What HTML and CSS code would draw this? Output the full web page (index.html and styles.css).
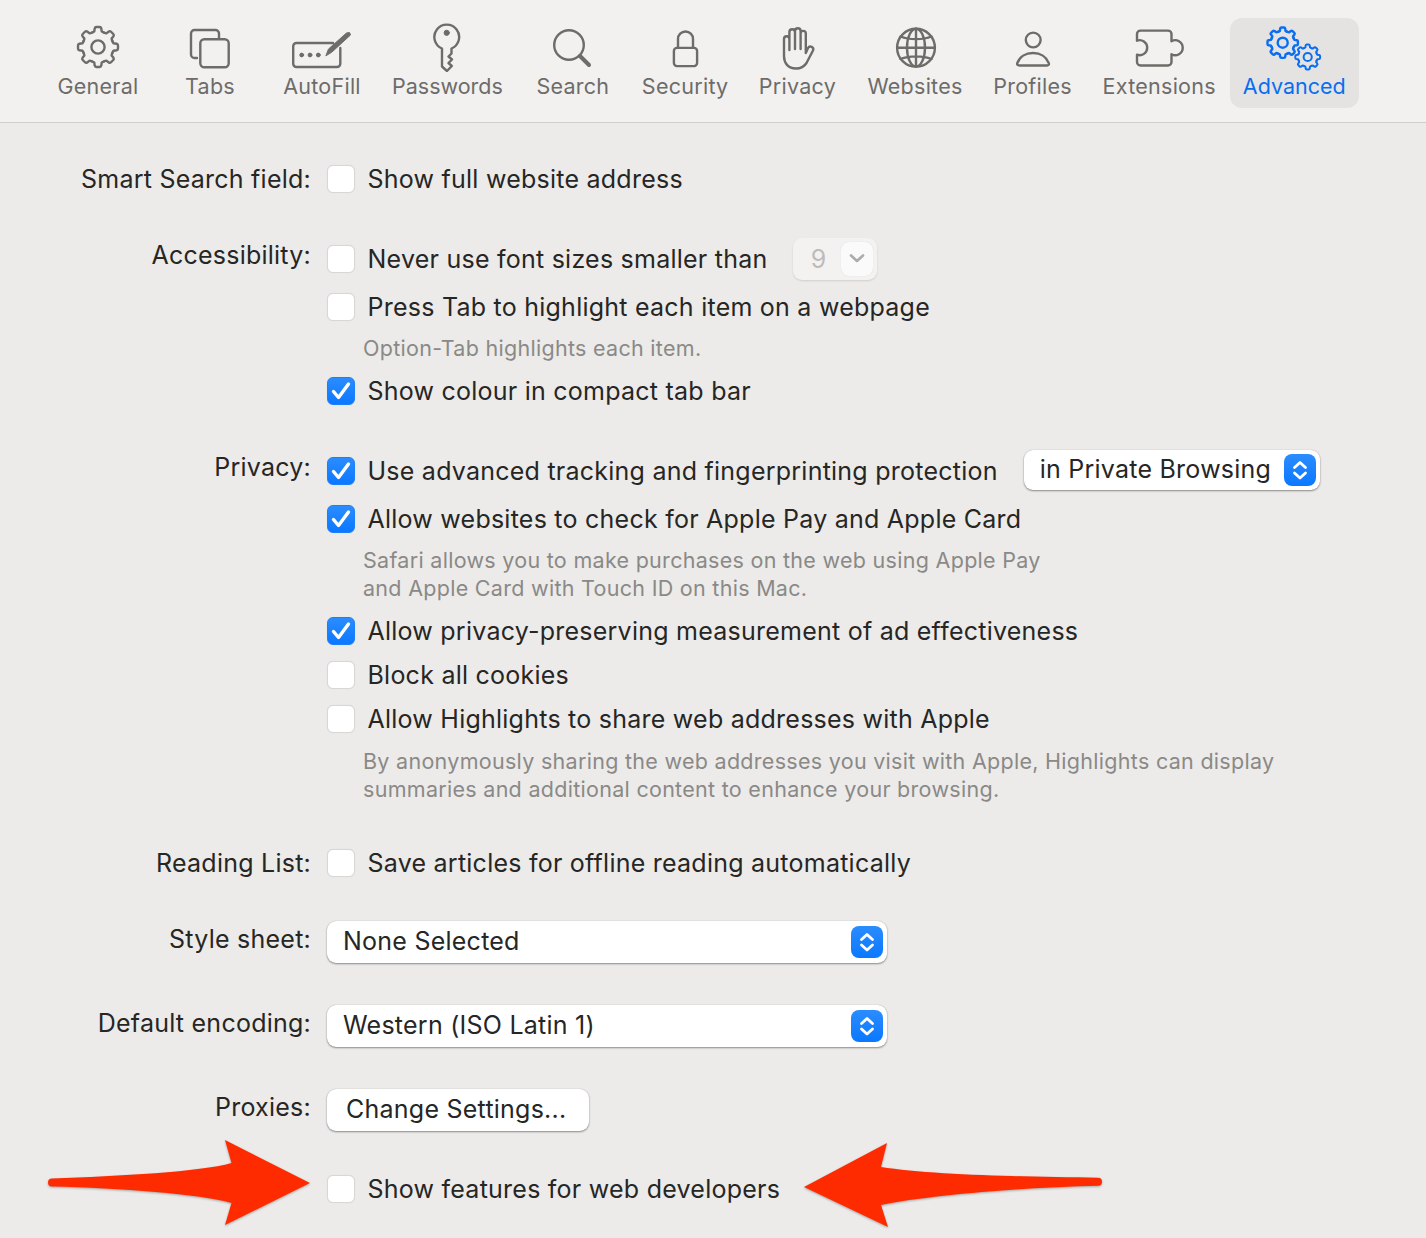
FILE: index.html
```html
<!DOCTYPE html>
<html lang="en">
<head>
    <meta charset="UTF-8">
    <meta name="viewport" content="width=device-width, initial-scale=1.0">
    <title>Advanced</title>
    <link rel="stylesheet" href="styles.css">
</head>
<body>
    <!-- shared icon parts -->
    <svg class="defs" width="0" height="0">
        <defs>
            <path id="tooth" d="M-6.2-14.3C-5-14.7-4.3-15-3.7-15.6L-3.3-18.6C-3.1-19.6-2.4-20-1.6-20H1.6C2.4-20 3.1-19.6 3.3-18.6L3.7-15.6C4.3-15 5-14.7 6.2-14.3"/>
            <g id="gear">
                <use href="#tooth"/>
                <use href="#tooth" transform="rotate(45)"/>
                <use href="#tooth" transform="rotate(90)"/>
                <use href="#tooth" transform="rotate(135)"/>
                <use href="#tooth" transform="rotate(180)"/>
                <use href="#tooth" transform="rotate(225)"/>
                <use href="#tooth" transform="rotate(270)"/>
                <use href="#tooth" transform="rotate(315)"/>
                <circle r="6.6"/>
            </g>
            <g id="updown">
                <path d="M10.5 13.5L16 8.5L21.5 13.5M10.5 19L16 24L21.5 19"/>
            </g>
            <path id="tick" d="M6.500 14.500L11.500 20.500L21.500 7"/>
        </defs>
    </svg>

    <header class="toolbar">
        <div class="tool">
            <svg class="icon" viewBox="0 0 64 50"><use href="#gear" transform="translate(32 25)"/></svg>
            <span>General</span>
        </div>
        <div class="tool">
            <svg class="icon" viewBox="0 0 64 50">
                <path d="M19 36H16.5a3.5 3.5 0 0 1-3.5-3.500V11.500a3.500 3.500 0 0 1 3.500-3.500H37.500a3.500 3.500 0 0 1 3.500 3.500V16"/>
                <rect x="22.300" y="17.300" width="28.400" height="28" rx="4"/>
            </svg>
            <span>Tabs</span>
        </div>
        <div class="tool">
            <svg class="icon" viewBox="0 0 64 50">
                <path d="M43 21H6.500a3.300 3.300 0 0 0-3.300 3.300V41.700a3.300 3.300 0 0 0 3.300 3.300H47a3.300 3.300 0 0 0 3.300-3.300V26"/>
                <circle class="solid" cx="11.700" cy="33" r="1.900"/>
                <circle class="solid" cx="20" cy="33" r="1.900"/>
                <circle class="solid" cx="28.300" cy="33" r="1.900"/>
                <path class="solid" d="M36 33.500L38.500 27L56.500 11L59.500 10.500L60.500 13L42 30Z"/>
            </svg>
            <span>AutoFill</span>
        </div>
        <div class="tool tool-wide tool-tight">
            <svg class="icon" viewBox="0 0 64 50">
                <path d="M27 26.500A12.400 12.400 0 1 1 36.500 26.500V31.500L33.500 34.500L37 37.500L33.500 41L36.800 44L32 49L27 44.500Z"/>
                <circle class="solid" cx="31.700" cy="10.800" r="2.600"/>
            </svg>
            <span>Passwords</span>
        </div>
        <div class="tool">
            <svg class="icon" viewBox="0 0 64 50">
                <circle cx="28" cy="23" r="14.800"/>
                <path class="thick" d="M39 34L48 43"/>
            </svg>
            <span>Search</span>
        </div>
        <div class="tool">
            <svg class="icon" viewBox="0 0 64 50">
                <rect x="20.900" y="25.900" width="23.200" height="18.200" rx="3"/>
                <path d="M25 25V17a7.500 7.500 0 0 1 15 0V25"/>
            </svg>
            <span>Security</span>
        </div>
        <div class="tool">
            <svg class="icon" viewBox="0 0 64 50">
                <path d="M19 34V17a2.700 2.700 0 0 1 5.400 0V28M24.400 17V10a2.800 2.800 0 0 1 5.600 0V27M30 10V9a2.800 2.800 0 0 1 5.600 0V27M35.600 11.500a2.600 2.600 0 0 1 5.200 0V31L43 26a2.800 2.800 0 0 1 5 2.500L41.500 41C39 45 35 46.500 31 46.500C23 46.500 19 41 19 34"/>
            </svg>
            <span>Privacy</span>
        </div>
        <div class="tool tool-wide">
            <svg class="icon" viewBox="0 0 64 50">
                <circle cx="33" cy="25.700" r="18.900"/>
                <ellipse cx="33" cy="25.700" rx="9" ry="18.900"/>
                <path d="M33 6.800V44.600M14.100 25.700H51.900M17.500 14.500C26 18 40 18 48.500 14.500M17.500 37C26 33.500 40 33.500 48.500 37"/>
            </svg>
            <span>Websites</span>
        </div>
        <div class="tool">
            <svg class="icon" viewBox="0 0 64 50">
                <circle cx="32.200" cy="18" r="7.400"/>
                <path d="M18.500 43.500H46C47.500 43.500 48.300 42.500 47.800 41.100C45.500 35 39.500 31 32 31S18.500 35 16.300 41.100C15.800 42.500 16.600 43.500 18.500 43.500Z"/>
            </svg>
            <span>Profiles</span>
        </div>
        <div class="tool tool-wide">
            <svg class="icon" viewBox="0 0 64 50">
                <path d="M13.500 8.600H41a3.500 3.500 0 0 1 3.500 3.500V19.200a7.500 7.500 0 1 1 0 13V40a3.500 3.500 0 0 1-3.500 3.500H13.500a3.500 3.500 0 0 1-3.500-3.500V32.700a7.500 7.500 0 1 0 0-14V12.100a3.500 3.500 0 0 1 3.500-3.500Z"/>
            </svg>
            <span>Extensions</span>
        </div>
        <div class="tool tool-tight tool-active">
            <svg class="icon" viewBox="0 0 64 50">
                <use href="#gear" transform="translate(20.700 20.700) scale(.76)"/>
                <use href="#gear" transform="translate(45.700 35) scale(.62)"/>
            </svg>
            <span>Advanced</span>
        </div>
    </header>

    <main class="prefs">
        <div class="row">
            <div class="name">Smart Search field:</div>
            <div class="check"><span class="box"></span>Show full website address</div>
        </div>

        <div class="row group">
            <div class="name name-up">Accessibility:</div>
            <div class="check">
                <span class="box"></span>Never use font sizes smaller than
                <div class="stepper">
                    <span class="stepper-value">9</span>
                    <span class="stepper-btn"><svg viewBox="0 0 32 32"><path d="M10 13.500L16 19L22 13.500"/></svg></span>
                </div>
            </div>
        </div>
        <div class="row next">
            <div class="check"><span class="box"></span>Press Tab to highlight each item on a webpage</div>
        </div>
        <div class="row row-note">
            <p class="note">Option-Tab highlights each item.</p>
        </div>
        <div class="row">
            <div class="check"><span class="box on"><svg viewBox="0 0 28 28"><use href="#tick"/></svg></span>Show colour in compact tab bar</div>
        </div>

        <div class="row group">
            <div class="name name-up">Privacy:</div>
            <div class="check">
                <span class="box on"><svg viewBox="0 0 28 28"><use href="#tick"/></svg></span>Use advanced tracking and fingerprinting protection
                <div class="popup popup-private">
                    <span class="popup-text">in Private Browsing</span>
                    <span class="popup-btn"><svg viewBox="0 0 32 32"><use href="#updown"/></svg></span>
                </div>
            </div>
        </div>
        <div class="row next">
            <div class="check"><span class="box on"><svg viewBox="0 0 28 28"><use href="#tick"/></svg></span>Allow websites to check for Apple Pay and Apple Card</div>
        </div>
        <div class="row row-note">
            <p class="note">Safari allows you to make purchases on the web using Apple Pay<br>and Apple Card with Touch ID on this Mac.</p>
        </div>
        <div class="row">
            <div class="check"><span class="box on"><svg viewBox="0 0 28 28"><use href="#tick"/></svg></span>Allow privacy-preserving measurement of ad effectiveness</div>
        </div>
        <div class="row tight">
            <div class="check"><span class="box"></span>Block all cookies</div>
        </div>
        <div class="row tight">
            <div class="check"><span class="box"></span>Allow Highlights to share web addresses with Apple</div>
        </div>
        <div class="row row-note row-note-last">
            <p class="note">By anonymously sharing the web addresses you visit with Apple, Highlights can display<br>summaries and additional content to enhance your browsing.</p>
        </div>

        <div class="row group">
            <div class="name">Reading List:</div>
            <div class="check"><span class="box"></span>Save articles for offline reading automatically</div>
        </div>

        <div class="row row-control first-control">
            <div class="name name-mid">Style sheet:</div>
            <div class="popup popup-wide">
                <span class="popup-text">None Selected</span>
                <span class="popup-btn"><svg viewBox="0 0 32 32"><use href="#updown"/></svg></span>
            </div>
        </div>
        <div class="row row-control">
            <div class="name name-mid">Default encoding:</div>
            <div class="popup popup-wide">
                <span class="popup-text">Western (ISO Latin 1)</span>
                <span class="popup-btn"><svg viewBox="0 0 32 32"><use href="#updown"/></svg></span>
            </div>
        </div>
        <div class="row row-control">
            <div class="name name-mid">Proxies:</div>
            <div class="push">Change Settings...</div>
        </div>
        <div class="row last-row">
            <div class="check"><span class="box"></span>Show features for web developers</div>
        </div>
    </main>

    <!-- red annotation arrows -->
    <svg class="arrow arrow-left" viewBox="40 1130 280 105">
        <path d="M52 1178.500C120 1176 200 1172 231.500 1163L225 1140L310 1183L225 1225L231.500 1203C200 1194 120 1188 52 1186.500a4 4 0 0 1 0-8Z"/>
    </svg>
    <svg class="arrow arrow-right" viewBox="795 1135 315 100">
        <path d="M1098 1177.700C1030 1177 930 1175 881 1167L887 1143L804 1187L888 1227L881 1205C930 1195 1030 1187 1098 1185.700a4 4 0 0 0 0-8Z"/>
    </svg>
</body>
</html>
```

FILE: styles.css
```css
body {
    margin: 0;
    height: 1238px;
    position: relative;
    overflow: hidden;
    background-color: #ecebe9;
    color: #262625;
    font-family: Inter, "Liberation Sans", sans-serif;
    font-size: 25px;
    letter-spacing: 0.24px;
}

.defs {
    display: block;
}

/* toolbar */
.toolbar {
    display: flex;
    box-sizing: border-box;
    height: 123px;
    padding: 18px 0 0 42px;
    background-color: #f2f1ef;
    border-bottom: 1px solid #d0cfcd;
}

.tool {
    display: flex;
    flex-direction: column;
    align-items: center;
    box-sizing: border-box;
    min-width: 112px;
    height: 90px;
    padding: 4px 13px 0;
    border-radius: 12px;
    color: #6d6c6a;
    font-size: 21.500px;
    letter-spacing: 0.26px;
    line-height: 26px;
    white-space: nowrap;
}

.tool-wide {
    padding: 4px 14px 0;
}

.tool-tight {
    letter-spacing: 0;
}

.icon {
    display: block;
    width: 64px;
    height: 50px;
    margin-bottom: 1px;
    fill: none;
    stroke: #6d6c6a;
    stroke-width: 2.400;
    stroke-linecap: round;
    stroke-linejoin: round;
}

.icon .solid {
    fill: #6d6c6a;
    stroke-width: 1;
}

.icon .thick {
    stroke-width: 4;
}

.tool-active {
    background-color: #e4e3e1;
    color: #0a6ef2;
}

.tool-active .icon {
    stroke: #0a6ef2;
    stroke-width: 3.200;
}

/* form rows */
.prefs {
    padding: 36px 0 0 8px;
}

.row {
    display: grid;
    grid-template-columns: 303px 1fr;
    column-gap: 16px;
    align-items: center;
    height: 40px;
    white-space: nowrap;
}

.group {
    margin-top: 40px;
}

.next {
    margin-top: 8px;
}

.tight {
    margin-top: 4px;
}

.name {
    grid-column: 1;
    text-align: right;
}

.name-up {
    padding-bottom: 8px;
}

.name-mid {
    padding-bottom: 6px;
}

.check {
    grid-column: 2;
    display: flex;
    align-items: center;
    height: 40px;
}

.box {
    flex: none;
    box-sizing: border-box;
    width: 28px;
    height: 28px;
    margin-right: 12.500px;
    background-color: #fff;
    border: 1px solid #d8d7d5;
    border-radius: 6px;
    box-shadow: 0 0 1px rgba(0, 0, 0, 0.1);
}

.box svg {
    display: block;
    width: 28px;
    height: 28px;
    margin: -1px;
    fill: none;
    stroke: #fff;
    stroke-width: 3.400;
    stroke-linecap: round;
    stroke-linejoin: round;
}

.box.on {
    background: linear-gradient(#2b8cff, #0a78ff);
    border-color: #1a80fb;
}

.row-note {
    height: auto;
    margin: 7px 0 9px;
}

.row-note-last {
    margin: 8px 0 0;
}

.note {
    grid-column: 2;
    margin: 0 0 0 36px;
    color: #8a8987;
    font-size: 21.500px;
    letter-spacing: 0.29px;
    line-height: 28px;
}

/* number stepper, greyed out */
.stepper {
    display: flex;
    align-items: center;
    justify-content: flex-end;
    box-sizing: border-box;
    width: 84px;
    height: 42px;
    margin: -1px 0 -1px 25px;
    padding-right: 4px;
    background-color: #f3f2f1;
    border-radius: 9px;
    box-shadow: 0 1px 2px rgba(0, 0, 0, 0.12);
    color: #bdbcbb;
}

.stepper-value {
    margin-right: 14px;
}

.stepper-btn {
    width: 32px;
    height: 34px;
    background-color: #fafafa;
    border-radius: 8px;
    box-shadow: 0 0 1px rgba(0, 0, 0, 0.15);
}

.stepper-btn svg {
    display: block;
    fill: none;
    stroke: #adacab;
    stroke-width: 2.600;
    stroke-linecap: round;
    stroke-linejoin: round;
}

/* popup menus and buttons */
.popup {
    grid-column: 2;
    display: flex;
    align-items: center;
    justify-content: space-between;
    box-sizing: border-box;
    height: 42px;
    padding: 0 4px 0 16px;
    background-color: #fff;
    border-radius: 9px;
    box-shadow: 0 0 1px rgba(0, 0, 0, 0.25), 0 1px 2px rgba(0, 0, 0, 0.4);
}

.popup-text {
    padding-bottom: 2px;
}

.popup-wide {
    width: 560px;
}

.popup-private {
    width: 296px;
    height: 40px;
    margin: -2px 0 0 26px;
}

.popup-btn {
    width: 32px;
    height: 32px;
    background: linear-gradient(#2b8cff, #0a78ff);
    border-radius: 8px;
}

.popup-btn svg {
    display: block;
    fill: none;
    stroke: #fff;
    stroke-width: 2.800;
    stroke-linecap: round;
    stroke-linejoin: round;
}

.row-control {
    height: 42px;
    margin-top: 42px;
}

.first-control {
    margin-top: 38px;
}

.last-row {
    margin-top: 38px;
}

.push {
    grid-column: 2;
    justify-self: start;
    box-sizing: border-box;
    width: 262px;
    height: 42px;
    padding-left: 19px;
    background-color: #fff;
    border-radius: 9px;
    box-shadow: 0 0 1px rgba(0, 0, 0, 0.25), 0 1px 2px rgba(0, 0, 0, 0.4);
    line-height: 40px;
}

/* annotation arrows sit over the form */
.arrow {
    position: absolute;
    fill: #ff2b00;
    filter: drop-shadow(0 1px 1px rgba(0, 0, 0, 0.3));
}

.arrow-left {
    left: 40px;
    top: 1130px;
    width: 280px;
    height: 105px;
}

.arrow-right {
    left: 795px;
    top: 1135px;
    width: 315px;
    height: 100px;
}
```
